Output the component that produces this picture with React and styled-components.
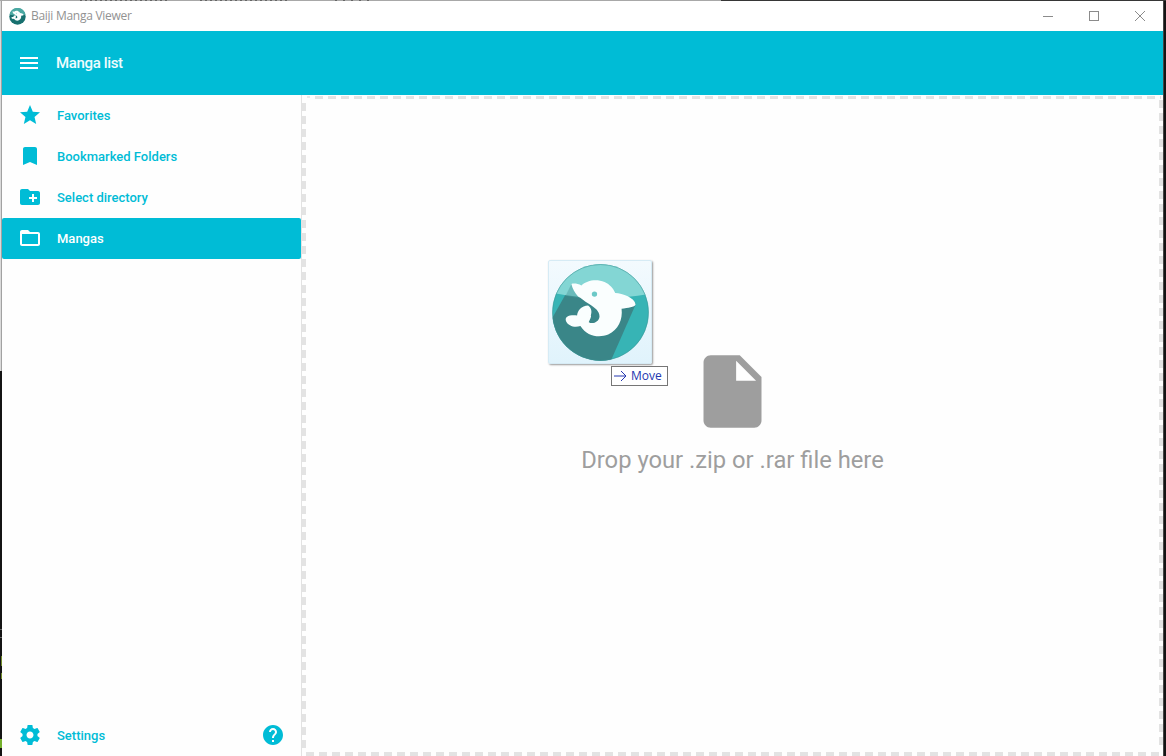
import React from 'react';
import styled, { createGlobalStyle } from 'styled-components';

const CYAN = '#00bcd6';

const GlobalStyle = createGlobalStyle`
  * { box-sizing: border-box; }
  body { margin: 0; background: #161616; overflow: hidden; }
`;

const Desktop = styled.div`
  width: 1166px;
  height: 756px;
  padding: 1px 3px 0 2px;
  background:
    linear-gradient(#75b02c, #75b02c) 0 739px / 2px 9px no-repeat,
    linear-gradient(#708a2a, #708a2a) 1px 656px / 1px 10px no-repeat,
    linear-gradient(#708a2a, #708a2a) 1px 673px / 1px 6px no-repeat,
    linear-gradient(#666, #666) 0 629px / 2px 1px no-repeat,
    linear-gradient(#666, #666) 0 637px / 2px 1px no-repeat,
    linear-gradient(90deg, #dadada 1px, #a2a2a2 1px) 0 1px / 2px 370px no-repeat,
    repeating-linear-gradient(90deg, #666 0 2px, #a8a8a8 2px 5px) 80px 0 / 88px 1px no-repeat,
    repeating-linear-gradient(90deg, #666 0 2px, #a8a8a8 2px 5px) 200px 0 / 88px 1px no-repeat,
    repeating-linear-gradient(90deg, #666 0 2px, #a8a8a8 2px 8px) 335px 0 / 40px 1px no-repeat,
    linear-gradient(90deg, #a8a8a8 721px, #363636 721px) 0 0 / 1166px 1px no-repeat,
    linear-gradient(#454545, #454545) 1163px 0 / 1px 756px no-repeat,
    #141414;
  font-family: Roboto, sans-serif;
`;

const Window = styled.div`
  display: flex;
  flex-direction: column;
  height: 755px;
  background: #fefefe;
`;

const TitleBar = styled.header`
  display: flex;
  align-items: center;
  flex: 0 0 30px;
  padding-left: 7px;
  background: #fff;
`;

const WindowTitle = styled.span`
  flex: 1;
  margin-left: 5px;
  color: #929292;
  font: 12px/16px 'Open Sans', sans-serif;
  letter-spacing: -0.28px;
`;

const WindowButtons = styled.div`
  display: flex;
`;

const WindowButton = styled.div`
  display: flex;
  align-items: center;
  justify-content: center;
  width: 46px;
  height: 28px;
  svg { fill: none; stroke: #8b8b8b; stroke-width: 1; }
`;

const AppBar = styled.div`
  display: flex;
  align-items: center;
  flex: 0 0 64px;
  padding-left: 15px;
  background: ${CYAN};
  color: #fff;
`;

const AppBarTitle = styled.h1`
  margin: 0 0 0 15px;
  font-size: 15px;
  font-weight: 500;
  line-height: 20px;
  letter-spacing: -0.35px;
  color: #effcfe;
`;

const Main = styled.div`
  display: flex;
  flex: 1;
  min-height: 0;
`;

const Sidebar = styled.nav`
  display: flex;
  flex-direction: column;
  justify-content: space-between;
  flex: 0 0 300px;
  border-right: 1px solid #e2e2e2;
`;

const NavList = styled.div`
  display: flex;
  flex-direction: column;
`;

const NavItem = styled.div`
  display: flex;
  align-items: center;
  gap: 15px;
  height: 41px;
  padding: 0 16px;
  border-radius: 2px;
  font-size: 13px;
  font-weight: 500;
  line-height: 18px;
  background: ${(p) => (p.$active ? CYAN : 'transparent')};
  color: ${(p) => (p.$active ? '#fff' : CYAN)};
  svg { margin-bottom: 1px; }
`;

const NavLabel = styled.span`
  flex: 1;
`;

const Glyph = styled.svg`
  display: block;
  flex: none;
  width: ${(p) => p.$size}px;
  height: ${(p) => p.$size}px;
  fill: currentColor;
`;

const dash = (angle) =>
  `repeating-linear-gradient(${angle}, #e3e3e3 0 8px, transparent 8px 13px)`;

const DropZone = styled.main`
  position: relative;
  display: flex;
  flex-direction: column;
  align-items: center;
  flex: 1;
  padding-top: 253px;
  color: #9e9e9e;
  background:
    ${dash('90deg')} 12.6px 1px / 846px 3px no-repeat,
    ${dash('90deg')} 4px 657px / 853px 4px no-repeat,
    ${dash('180deg')} 0 7.5px / 4px 649px no-repeat,
    ${dash('180deg')} 857px 5px / 4px 650px no-repeat,
    linear-gradient(#e9e9e9, #e9e9e9) 5px 1px / 3px 2px no-repeat,
    #fefefe;
`;

const DropText = styled.p`
  margin: 11px 0 0;
  font-size: 23.75px;
  line-height: 28px;
  white-space: nowrap;
`;

const DragPreview = styled.div`
  position: absolute;
  left: 246px;
  top: 165px;
  width: 104px;
  height: 104px;
  border: 1px solid #d6ebf5;
  border-radius: 2px;
  background: linear-gradient(#f3fafe, #e0f3fc);
  box-shadow: 1px 1px 2px rgba(0, 0, 0, 0.4);
  display: flex;
  align-items: center;
  justify-content: center;
`;

const DragHint = styled.div`
  position: absolute;
  left: 309px;
  top: 271px;
  display: flex;
  align-items: center;
  gap: 4px;
  width: 57px;
  height: 20px;
  padding-left: 1px;
  border: 1px solid #767676;
  background: #fff;
  color: #2438b0;
  font: 12px/16px 'Open Sans', sans-serif;
`;

const paths = {
  menu: 'M3 18h18v-2H3v2zm0-5h18v-2H3v2zm0-7v2h18V6H3z',
  star: 'M12 17.27L18.18 21l-1.64-7.03L22 9.24l-7.19-.61L12 2 9.19 8.63 2 9.24l5.46 4.73L5.82 21z',
  bookmark: 'M17 3H7c-1.1 0-1.99.9-1.99 2L5 21l7-3 7 3V5c0-1.1-.9-2-2-2z',
  newFolder:
    'M20 6h-8l-2-2H4c-1.11 0-1.99.89-1.99 2L2 18c0 1.11.89 2 2 2h16c1.11 0 2-.89 2-2V8c0-1.11-.89-2-2-2zm-1 8h-3v3h-2v-3h-3v-2h3V9h2v3h3v2z',
  folder:
    'M20 6h-8l-2-2H4c-1.1 0-1.99.9-1.99 2L2 18c0 1.1.9 2 2 2h16c1.1 0 2-.9 2-2V8c0-1.1-.9-2-2-2zm0 12H4V8h16v10z',
  settings:
    'M19.43 12.98c.04-.32.07-.64.07-.98s-.03-.66-.07-.98l2.11-1.65c.19-.15.24-.42.12-.64l-2-3.46c-.12-.22-.39-.3-.61-.22l-2.49 1c-.52-.4-1.08-.73-1.69-.98l-.38-2.65C14.46 2.18 14.25 2 14 2h-4c-.25 0-.46.18-.49.42l-.38 2.65c-.61.25-1.17.59-1.69.98l-2.49-1c-.23-.09-.49 0-.61.22l-2 3.46c-.13.22-.07.49.12.64l2.11 1.65c-.04.32-.07.65-.07.98s.03.66.07.98l-2.11 1.65c-.19.15-.24.42-.12.64l2 3.46c.12.22.39.3.61.22l2.49-1c.52.4 1.08.73 1.69.98l.38 2.65c.03.24.24.42.49.42h4c.25 0 .46-.18.49-.42l.38-2.65c.61-.25 1.17-.59 1.69-.98l2.49 1c.23.09.49 0 .61-.22l2-3.46c.12-.22.07-.49-.12-.64l-2.11-1.65zM12 15.5c-1.93 0-3.5-1.57-3.5-3.5s1.57-3.5 3.5-3.5 3.5 1.57 3.5 3.5-1.57 3.5-3.5 3.5z',
  help:
    'M12 2C6.48 2 2 6.48 2 12s4.48 10 10 10 10-4.48 10-10S17.52 2 12 2zm1 17h-2v-2h2v2zm2.07-7.75l-.9.92C13.45 12.9 13 13.5 13 15h-2v-.5c0-1.1.45-2.1 1.17-2.83l1.24-1.26c.37-.36.59-.86.59-1.41 0-1.1-.9-2-2-2s-2 .9-2 2H8c0-2.21 1.79-4 4-4s4 1.79 4 4c0 .88-.36 1.68-.93 2.25z',
  file:
    'M6 2c-1.1 0-1.99.9-1.99 2L4 20c0 1.1.89 2 1.99 2H18c1.1 0 2-.9 2-2V8l-6-6H6zm7 7V3.5L18.5 9H13z',
};

const Icon = ({ name, size = 24 }) => (
  <Glyph viewBox="0 0 24 24" $size={size}>
    <path d={paths[name]} />
  </Glyph>
);

const Dolphin = () => (
  <>
    <path
      fill="#fafefe"
      d="M93 95C100 92 112 94 123 99C138 84 168 78 192 89C208 96 219 109 224 122C246 123 282 136 285 156C282 165 262 165 243 169C247 202 233 232 203 246C174 257 140 251 120 220C104 226 84 221 77 206C72 192 86 187 110 189C111 174 123 160 143 159C153 166 155 178 151 188C154 193 147 202 145 209C156 216 176 209 177 192C177 176 164 166 145 154C130 145 124 138 113 132C104 122 96 110 93 95Z"
    />
    <circle cx="162" cy="125" r="8" fill="#6cc9c7" />
  </>
);

const BaijiLogo = () => (
  <svg width="97" height="97" viewBox="35 35 290 290">
    <defs>
      <clipPath id="disc">
        <circle cx="180" cy="180" r="144" />
      </clipPath>
    </defs>
    <g clipPath="url(#disc)">
      <rect x="30" y="30" width="300" height="300" fill="#37b4b5" />
      <path fill="#3a8688" d="M93 95L20 225V340H204L286 154L220 125Z" />
      <path fill="#8edbd8" fillOpacity=".88" d="M30 30H330V124Q180 152 30 120Z" />
      <path fill="#4a9f9f" fillOpacity=".45" d="M93 95L76 130Q100 136 120 137Z" />
    </g>
    <circle cx="180" cy="180" r="143.5" fill="none" stroke="#3f8f90" strokeWidth="2" strokeOpacity=".7" />
    <Dolphin />
  </svg>
);

const AppIcon = () => (
  <svg width="17" height="17" viewBox="35 35 290 290">
    <circle cx="180" cy="180" r="140" fill="#17706f" />
    <path fill="#4aa8a2" d="M42 150A140 140 0 0 1 318 150Q180 175 42 150Z" />
    <Dolphin />
  </svg>
);

const navItems = [
  { icon: 'star', label: 'Favorites' },
  { icon: 'bookmark', label: 'Bookmarked Folders' },
  { icon: 'newFolder', label: 'Select directory' },
  { icon: 'folder', label: 'Mangas', active: true },
];

export default function App() {
  return (
    <Desktop>
      <GlobalStyle />
      <Window>
        <TitleBar>
          <AppIcon />
          <WindowTitle>Baiji Manga Viewer</WindowTitle>
          <WindowButtons>
            <WindowButton>
              <svg width="10" height="10"><path d="M0 5.5H10" /></svg>
            </WindowButton>
            <WindowButton>
              <svg width="10" height="10"><rect x=".5" y=".5" width="9" height="9" /></svg>
            </WindowButton>
            <WindowButton>
              <svg width="10" height="10"><path d="M0 0L10 10M10 0L0 10" /></svg>
            </WindowButton>
          </WindowButtons>
        </TitleBar>
        <AppBar>
          <Icon name="menu" />
          <AppBarTitle>Manga list</AppBarTitle>
        </AppBar>
        <Main>
          <Sidebar>
            <NavList>
              {navItems.map((item) => (
                <NavItem key={item.label} $active={item.active}>
                  <Icon name={item.icon} />
                  <NavLabel>{item.label}</NavLabel>
                </NavItem>
              ))}
            </NavList>
            <NavItem>
              <Icon name="settings" />
              <NavLabel>Settings</NavLabel>
              <Icon name="help" />
            </NavItem>
          </Sidebar>
          <DropZone>
            <Icon name="file" size={87} />
            <DropText>Drop your .zip or .rar file here</DropText>
            <DragPreview>
              <BaijiLogo />
            </DragPreview>
            <DragHint>
              <svg width="14" height="12" fill="none" stroke="currentColor">
                <path d="M1 6H13M8 1L13 6L8 11" />
              </svg>
              <span>Move</span>
            </DragHint>
          </DropZone>
        </Main>
      </Window>
    </Desktop>
  );
}
